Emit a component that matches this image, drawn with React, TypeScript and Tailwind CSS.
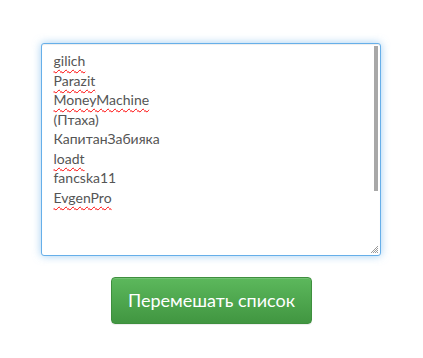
import React from 'react';

const names = [
  { text: 'gilich', typo: true },
  { text: 'Parazit', typo: true },
  { text: 'MoneyMachine', typo: true },
  { text: '(Птаха)', typo: false },
  { text: 'КапитанЗабияка', typo: false },
  { text: 'loadt', typo: true },
  { text: 'fancska11', typo: false },
  { text: 'EvgenPro', typo: true },
];

const ResizeGrip = () => (
  <svg width="10" height="10" viewBox="0 0 10 10" className="absolute right-[1px] bottom-[1px]">
    <path d="M9 2L2 9M9 4L4 9M9 6L6 9M9 8L8 9" stroke="#9a9a9a" strokeWidth="1" />
  </svg>
);

export default function App() {
  return (
    <div className="w-[423px] h-[358px] bg-white flex flex-col items-center pt-[43px] font-['Lato','Open_Sans',sans-serif]">
      <div className="relative w-[340px] h-[213px] ml-[-2px] bg-white border border-[#66afe9] rounded-[3px] shadow-[inset_0_1px_1px_rgba(0,0,0,0.075),0_0_8px_rgba(102,175,233,0.6)] pl-[12px] pt-[7px] text-[14px] leading-[19.5px] text-[#555]">
        {names.map((n) => (
          <div key={n.text}>
            <span className={n.typo ? 'underline decoration-wavy decoration-[#f00] decoration-1 underline-offset-[3px]' : ''}>
              {n.text}
            </span>
          </div>
        ))}
        <div className="absolute right-[2px] top-[2px] w-[4px] h-[145px] bg-[#a8a8a8]" />
        <ResizeGrip />
      </div>
      <button className="mt-[21px] w-[201px] h-[47px] rounded-[4px] border border-[#3e8f3e] bg-gradient-to-b from-[#5cb85c] to-[#419641] text-white text-[18px] shadow-[inset_0_1px_0_rgba(255,255,255,0.15),0_1px_1px_rgba(0,0,0,0.075)]">
        Перемешать список
      </button>
    </div>
  );
}
